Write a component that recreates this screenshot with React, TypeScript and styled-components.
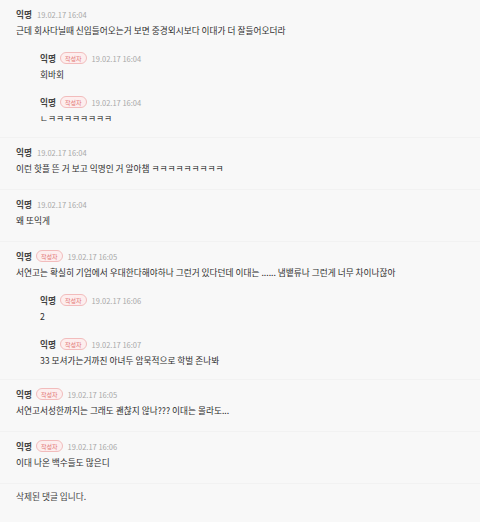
import styled, { createGlobalStyle } from 'styled-components';

type ReplyItem = {
    id: string;
    date: string;
    text: string;
    isWriter?: boolean;
};

type CommentItem = ReplyItem & {
    replies?: ReplyItem[];
    deleted?: boolean;
};

const comments: CommentItem[] = [
    {
        id: 'c1',
        date: '19.02.17 16:04',
        text: '근데 회사다닐때 신입들어오는거 보면 중경외시보다 이대가 더 잘들어오더라',
        replies: [
            { id: 'r1', date: '19.02.17 16:04', text: '회바회', isWriter: true },
            { id: 'r2', date: '19.02.17 16:04', text: 'ㄴㅋㅋㅋㅋㅋㅋㅋㅋ', isWriter: true },
        ],
    },
    { id: 'c2', date: '19.02.17 16:04', text: '이런 핫플 뜬 거 보고 익명인 거 알아챔 ㅋㅋㅋㅋㅋㅋㅋㅋㅋ' },
    { id: 'c3', date: '19.02.17 16:04', text: '왜 또익게' },
    {
        id: 'c4',
        date: '19.02.17 16:05',
        isWriter: true,
        text: '서연고는 확실히 기업에서 우대한다해야하나 그런거 있다던데 이대는 ...... 냄뱉류나 그런게 너무 차이나잖아',
        replies: [
            { id: 'r3', date: '19.02.17 16:06', text: '2', isWriter: true },
            { id: 'r4', date: '19.02.17 16:07', text: '33 모셔가는거까진 아녀두 암묵적으로 학벌 존나봐', isWriter: true },
        ],
    },
    { id: 'c5', date: '19.02.17 16:05', isWriter: true, text: '서연고서성한까지는 그래도 괜찮지 않나??? 이대는 몰라도...' },
    { id: 'c6', date: '19.02.17 16:06', isWriter: true, text: '이대 나온 백수들도 많은디' },
    { id: 'c7', date: '', text: '삭제된 댓글 입니다.', deleted: true },
];

const Meta = ({ item }: { item: ReplyItem }) => (
    <MetaRow>
        <Name>익명</Name>
        {item.isWriter && <Badge>작성자</Badge>}
        <Date>{item.date}</Date>
    </MetaRow>
);

export default function App() {
    return (
        <>
            <GlobalStyle />
            <List>
                {comments.map((c) =>
                    c.deleted ? (
                        <Deleted key={c.id}>{c.text}</Deleted>
                    ) : (
                        <Comment key={c.id} $hasReplies={!!c.replies}>
                            <Meta item={c} />
                            <Text>{c.text}</Text>

                            {c.replies?.map((r) => (
                                <Reply key={r.id}>
                                    <Meta item={r} />
                                    <Text>{r.text}</Text>
                                </Reply>
                            ))}
                        </Comment>
                    )
                )}
            </List>
        </>
    );
}

const GlobalStyle = createGlobalStyle`
    html, body {
        margin: 0;
        background: #f8f8f8;
    }
    body {
        font-family: "Noto Sans CJK KR", "Noto Sans", sans-serif;
        color: #333;
    }
`;

const List = styled.div`
    width: 480px;
    min-height: 522px;
    background: #f8f8f8;
`;

const Comment = styled.div<{ $hasReplies: boolean }>`
    padding: 6px 16px ${({ $hasReplies }) => ($hasReplies ? '10px' : '12px')};
    border-bottom: 1px solid #f2f2f2;
`;

const Reply = styled.div`
    padding: 11px 0 0 24px;
`;

const MetaRow = styled.div`
    display: flex;
    align-items: center;
    height: 16px;
`;

const Name = styled.span`
    font-size: 8.7px;
    font-weight: 700;
    color: #444;
`;

const Badge = styled.span`
    display: inline-flex;
    align-items: center;
    height: 10px;
    margin-left: 4px;
    padding: 0 4px;
    border: 1px solid #f2bcbc;
    border-radius: 6px;
    background: #fdeeee;
    color: #e27474;
    font-size: 6px;
`;

const Date = styled.span`
    margin-left: 5px;
    font-size: 7.5px;
    color: #a8a8a8;
`;

const Text = styled.p`
    margin: 0;
    font-size: 8.7px;
    line-height: 17px;
    color: #2e2e2e;
`;

const Deleted = styled.div`
    padding: 4px 16px 12px;
    font-size: 8.7px;
    line-height: 17px;
    color: #444;
`;
